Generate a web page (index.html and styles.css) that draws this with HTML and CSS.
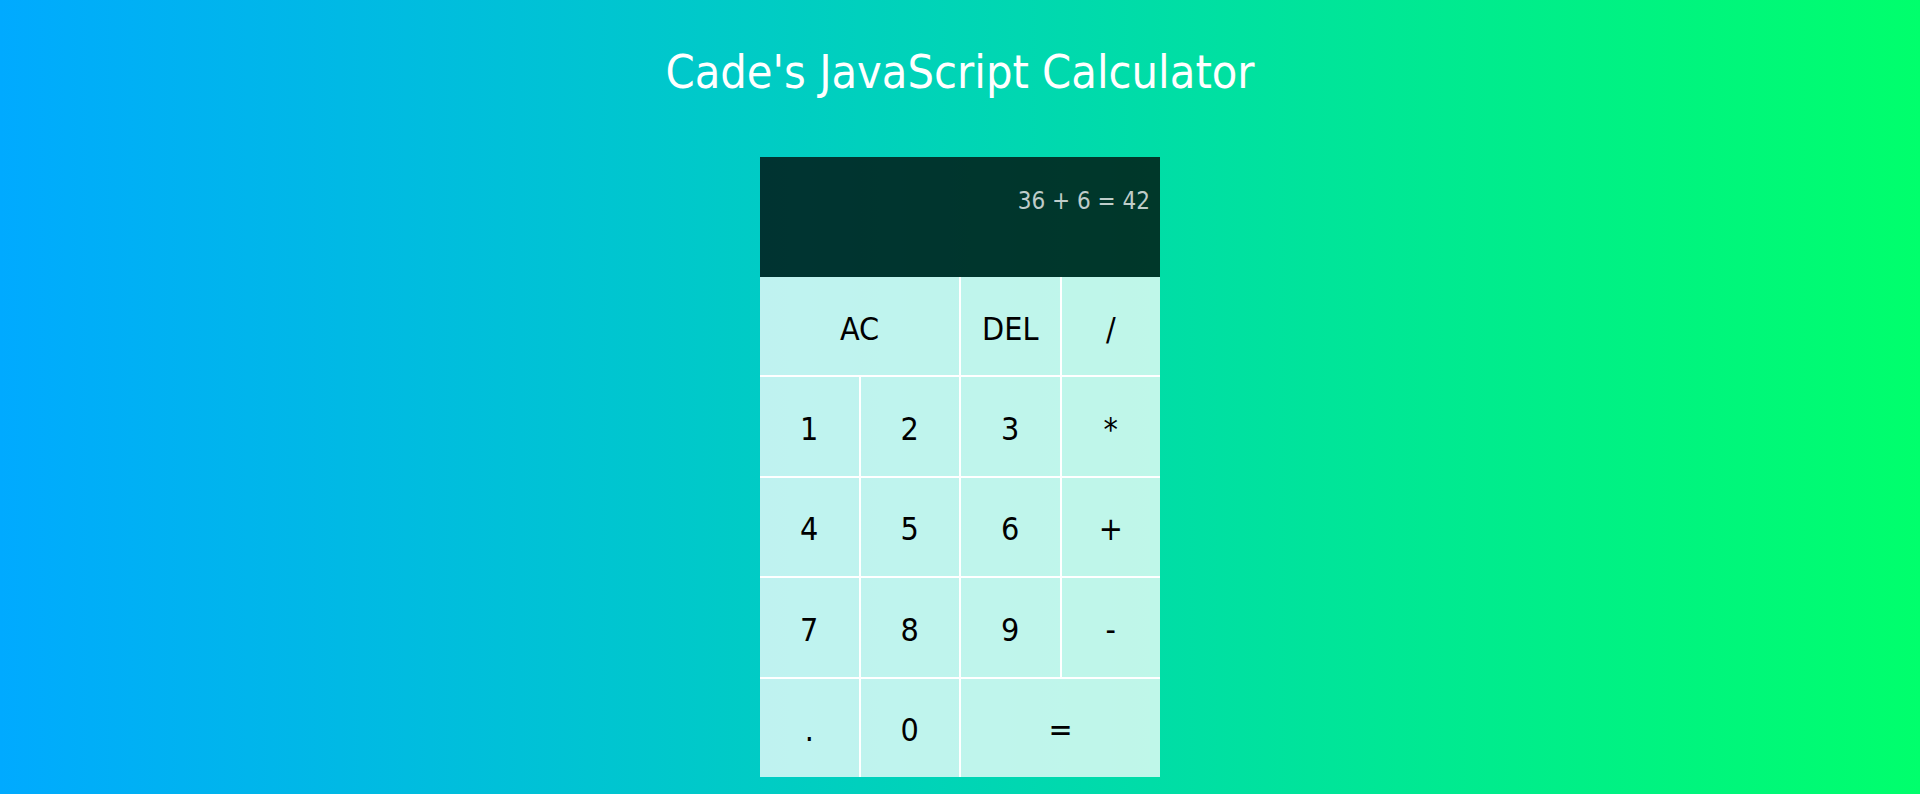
FILE: index.html
```html
<!DOCTYPE html>
<html lang="en">
<head>
<meta charset="utf-8">
<title>Cade's JavaScript Calculator</title>
<link rel="stylesheet" href="styles.css">
</head>
<body>
<main class="page">
  <h1 class="title">Cade's JavaScript Calculator</h1>
  <div class="calculator">
    <div class="output">
      <div class="previous-operand">36 + 6 = 42</div>
      <div class="current-operand"></div>
    </div>
    <div class="keys">
      <div class="keys-grid">
        <button class="key span-two">AC</button>
        <button class="key">DEL</button>
        <button class="key">/</button>
        <button class="key">1</button>
        <button class="key">2</button>
        <button class="key">3</button>
        <button class="key">*</button>
        <button class="key">4</button>
        <button class="key">5</button>
        <button class="key">6</button>
        <button class="key">+</button>
        <button class="key">7</button>
        <button class="key">8</button>
        <button class="key">9</button>
        <button class="key">-</button>
        <button class="key">.</button>
        <button class="key">0</button>
        <button class="key span-two">=</button>
      </div>
    </div>
  </div>
</main>
</body>
</html>
```

FILE: styles.css
```css
*, *::before, *::after {
  box-sizing: border-box;
}

html, body {
  margin: 0;
  padding: 0;
}

body {
  min-height: 100vh;
  background: linear-gradient(to right, #00aaff, #00ff6c);
  font-family: "DejaVu Sans Condensed", "DejaVu Sans", sans-serif;
  font-stretch: condensed;
}

.page {
  display: flex;
  flex-direction: column;
  align-items: center;
}

.title {
  margin: 0;
  padding-top: 43px;
  line-height: 58px;
  font-size: 46.5px;
  font-weight: normal;
  color: #ffffff;
}

.calculator {
  margin-top: 56px;
  width: 400px;
  display: flex;
  flex-direction: column;
}

.output {
  height: 120px;
  background-color: rgba(0, 0, 0, 0.75);
  display: flex;
  flex-direction: column;
  align-items: flex-end;
  justify-content: space-around;
  padding: 12px 10px 10px;
}

.previous-operand {
  color: rgba(255, 255, 255, 0.75);
  font-size: 24px;
}

.current-operand {
  color: #ffffff;
  font-size: 40px;
}

.keys {
  overflow: hidden;
}

.keys-grid {
  margin: -1px;
  display: grid;
  grid-template-columns: repeat(4, 1fr);
  grid-auto-rows: 100.4px;
}

.key {
  font-family: inherit;
  font-stretch: condensed;
  font-size: 32px;
  color: #000000;
  border: 1px solid #ffffff;
  outline: none;
  background-color: rgba(255, 255, 255, 0.75);
  padding: 5px 0 0;
  cursor: pointer;
}

.span-two {
  grid-column: span 2;
}
```
